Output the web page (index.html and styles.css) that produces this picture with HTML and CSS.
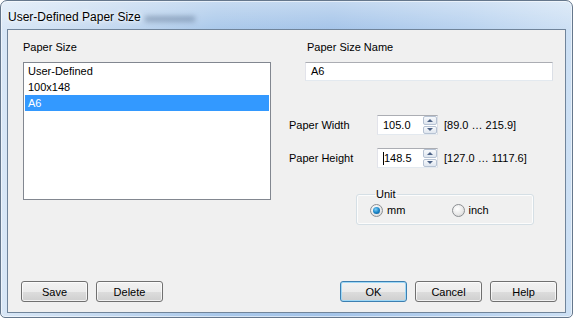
FILE: index.html
```html
<!DOCTYPE html>
<html lang="en">

<head>
    <meta charset="UTF-8">
    <meta name="viewport" content="width=device-width, initial-scale=1.0">
    <title>User-Defined Paper Size</title>
    <link rel="stylesheet" href="styles.css">
</head>

<body>
    <div class="window">
        <div class="titlebar">
            <span class="title">User-Defined Paper Size</span>
            <span class="title-glass"></span>
        </div>

        <div class="client">
            <div class="main">
                <div class="left-col">
                    <div class="label">Paper Size</div>
                    <ul class="listbox">
                        <li>User-Defined</li>
                        <li>100x148</li>
                        <li class="selected">A6</li>
                    </ul>
                </div>

                <div class="right-col">
                    <div class="name-block">
                        <div class="label name-label">Paper Size Name</div>
                        <div class="textbox">A6</div>
                    </div>

                    <div class="dim-row">
                        <span class="dim-label">Paper Width</span>
                        <div class="spinbox">
                            <span class="spin-value">105.0</span>
                            <span class="spin-buttons">
                                <span class="spin-btn up"></span>
                                <span class="spin-btn down"></span>
                            </span>
                        </div>
                        <span class="range">[89.0 … 215.9]</span>
                    </div>

                    <div class="dim-row second">
                        <span class="dim-label">Paper Height</span>
                        <div class="spinbox">
                            <span class="spin-value"><span class="caret"></span>148.5</span>
                            <span class="spin-buttons">
                                <span class="spin-btn up"></span>
                                <span class="spin-btn down"></span>
                            </span>
                        </div>
                        <span class="range">[127.0 … 1117.6]</span>
                    </div>

                    <fieldset class="unit-group">
                        <legend>Unit</legend>
                        <label class="radio"><span class="radio-dot checked"></span>mm</label>
                        <label class="radio"><span class="radio-dot"></span>inch</label>
                    </fieldset>
                </div>
            </div>

            <div class="buttons">
                <div class="btn-group">
                    <button>Save</button>
                    <button>Delete</button>
                </div>
                <div class="btn-group">
                    <button class="default">OK</button>
                    <button>Cancel</button>
                    <button>Help</button>
                </div>
            </div>
        </div>
    </div>
</body>

</html>
```

FILE: styles.css
```css
* {
    box-sizing: border-box;
}

body {
    margin: 0;
    font-family: "Liberation Sans", Arial, sans-serif;
    font-size: 11px;
    color: #000;
    background-color: #fff;
}

.window {
    width: 573px;
    height: 318px;
    border: 1px solid #65778c;
    border-radius: 7px 7px 5px 5px;
    padding: 0 6px 4px 6px;
    display: flex;
    flex-direction: column;
    background:
        linear-gradient(to bottom, rgba(255, 255, 255, 0.35), rgba(255, 255, 255, 0) 30px),
        linear-gradient(to right, #d9e7f6 0%, #c4d9f0 18%, #a9c8ea 38%, #a4c4e9 58%, #b8d2ef 82%, #cde0f4 100%);
    box-shadow: inset 0 0 0 1px rgba(255, 255, 255, 0.55);
}

.titlebar {
    height: 28px;
    display: flex;
    align-items: center;
    padding: 3px 0 0 1px;
}

.title {
    font-size: 12px;
    text-shadow: 0 0 6px #fff, 0 0 3px #fff;
}

.title-glass {
    width: 50px;
    height: 6px;
    margin: 5px 0 0 4px;
    background-color: rgba(60, 80, 110, 0.35);
    filter: blur(2.5px);
}

.client {
    flex: 1;
    display: flex;
    flex-direction: column;
    background-color: #f0f0f0;
    border: 1px solid #70849a;
}

.main {
    flex: 1;
    display: flex;
    padding: 11px 0 0 15px;
}

.label {
    line-height: 13px;
    margin-bottom: 8px;
}

.listbox {
    width: 248px;
    height: 138px;
    margin: 0;
    padding: 0 1px;
    list-style: none;
    background-color: #fff;
    border: 1px solid #828790;
}

.listbox li {
    height: 16px;
    line-height: 16px;
    padding-left: 3px;
}

.listbox li.selected {
    background-color: #3399ff;
    color: #fff;
}

.right-col {
    margin-left: 18px;
    display: flex;
    flex-direction: column;
}

.name-block {
    padding-left: 16px;
}

.name-label {
    padding-left: 2px;
}

.textbox {
    width: 248px;
    height: 19px;
    line-height: 17px;
    padding-left: 5px;
    background-color: #fff;
    border: 1px solid;
    border-color: #abadb3 #dbdfe6 #e3e9ef #e2e3ea;
}

.dim-row {
    display: flex;
    align-items: center;
    margin-top: 34px;
}

.dim-row.second {
    margin-top: 13px;
}

.dim-label {
    width: 88px;
}

.spinbox {
    width: 61px;
    height: 20px;
    display: flex;
    background-color: #fff;
    border: 1px solid;
    border-color: #abadb3 #dbdfe6 #e3e9ef #e2e3ea;
}

.spin-value {
    flex: 1;
    line-height: 18px;
    padding-left: 5px;
    display: flex;
    align-items: center;
}

.caret {
    width: 1px;
    height: 13px;
    background-color: #000;
    margin-right: 0;
}

.spin-buttons {
    width: 15px;
    display: flex;
    flex-direction: column;
    gap: 1px;
    padding: 0 0 0 1px;
}

.spin-btn {
    flex: 1;
    display: flex;
    align-items: center;
    justify-content: center;
    border: 1px solid #b6c2d3;
    border-radius: 2px;
    background: linear-gradient(to bottom, #f7f9fc, #dfe6ef);
}

.spin-btn::after {
    content: "";
    border-left: 3px solid transparent;
    border-right: 3px solid transparent;
}

.spin-btn.up::after {
    border-bottom: 3px solid #4c6286;
}

.spin-btn.down::after {
    border-top: 3px solid #4c6286;
}

.range {
    margin-left: 6px;
}

.unit-group {
    width: 178px;
    margin: 20px 0 0 67px;
    padding: 3px 0 7px 13px;
    display: flex;
    border: 1px solid #d5dfe5;
    border-radius: 3px;
    box-shadow: inset 0 0 0 1px rgba(255, 255, 255, 0.8);
    min-inline-size: 0;
}

.unit-group legend {
    padding: 0 1px;
    margin-left: 5px;
    line-height: 13px;
}

.radio {
    width: 88px;
    display: flex;
    align-items: center;
    gap: 4px;
    line-height: 13px;
}

.radio-dot {
    width: 13px;
    height: 13px;
    border-radius: 50%;
    border: 1px solid #8b8e92;
    background: radial-gradient(circle at 40% 35%, #ffffff 0%, #e9e9e9 55%, #cfcfcf 100%);
    display: flex;
    align-items: center;
    justify-content: center;
}

.radio-dot.checked::after {
    content: "";
    width: 7px;
    height: 7px;
    border-radius: 50%;
    background: radial-gradient(circle at 40% 35%, #7fd0f7 0%, #1b86c8 50%, #0c4f86 100%);
}

.buttons {
    display: flex;
    justify-content: space-between;
    padding: 0 8px 10px 13px;
}

.btn-group {
    display: flex;
    gap: 8px;
}

button {
    width: 67px;
    height: 21px;
    padding: 0;
    font-family: inherit;
    font-size: 11px;
    color: #000;
    border: 1px solid #707070;
    border-radius: 3px;
    background: linear-gradient(to bottom, #f2f2f2 0%, #ebebeb 50%, #dddddd 51%, #cfcfcf 100%);
    box-shadow: inset 0 0 0 1px rgba(255, 255, 255, 0.7);
}

button.default {
    border-color: #3c7fb1;
    box-shadow: inset 0 0 0 1px #9fd8f6;
}
```
